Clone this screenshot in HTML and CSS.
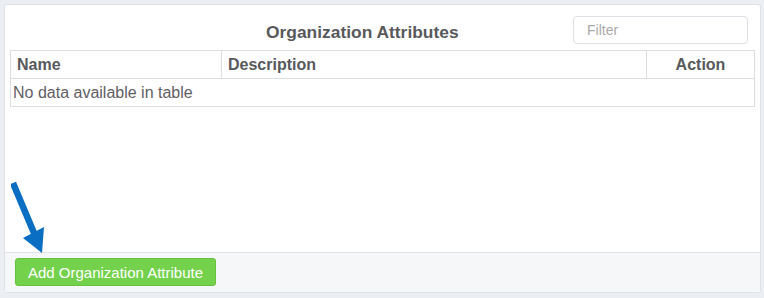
FILE: index.html
```html
<!DOCTYPE html>
<html>
<head>
<meta charset="utf-8">
<link rel="stylesheet" href="styles.css">
</head>
<body>
<div class="panel">
  <div class="panel-body">
    <div class="toolbar">
      <h2 class="title">Organization Attributes</h2>
      <input class="filter" type="text" placeholder="Filter">
    </div>
    <table class="grid">
      <thead>
        <tr>
          <th class="col-name">Name</th>
          <th class="col-desc">Description</th>
          <th class="col-action">Action</th>
        </tr>
      </thead>
      <tbody>
        <tr><td colspan="3" class="empty">No data available in table</td></tr>
      </tbody>
    </table>
  </div>
  <div class="panel-footer">
    <button class="btn-add" type="button">Add Organization Attribute</button>
  </div>
  <svg class="arrow" width="40" height="80" viewBox="0 0 40 80">
    <line x1="2" y1="4" x2="23" y2="54" stroke="#0a6fc2" stroke-width="6.5"/>
    <polygon points="12,59 33,48 31,74" fill="#0a6fc2"/>
  </svg>
</div>
</body>
</html>
```
FILE: styles.css
```css
html, body {
  margin: 0;
  padding: 0;
}
body {
  background: #ebeef3;
  font-family: "Liberation Sans", Arial, sans-serif;
  padding: 4px 3px 4px 4px;
  height: 298px;
  box-sizing: border-box;
}
.panel {
  position: relative;
  background: #fff;
  border: 1px solid #dfe2e7;
  border-radius: 3px;
  height: 289px;
  box-sizing: border-box;
  display: flex;
  flex-direction: column;
}
.panel-body {
  flex: 1;
  padding: 11px 5px 0 5px;
}
.toolbar {
  display: flex;
  align-items: center;
  padding-left: 256px;
  padding-right: 7px;
  margin-bottom: 6px;
}
.title {
  margin: 4px 0 0 0;
  font-size: 17.4px;
  font-weight: bold;
  color: #58595c;
}
.filter {
  margin-left: auto;
  width: 175px;
  height: 28px;
  box-sizing: border-box;
  border: 1px solid #dcdfe3;
  border-radius: 4px;
  padding: 0 13px;
  font-family: "Liberation Sans", Arial, sans-serif;
  font-size: 14px;
  color: #555;
  outline: none;
}
.filter::placeholder {
  color: #a9a9a9;
}
.grid {
  width: 100%;
  border-collapse: collapse;
  border: 1px solid #dedede;
  font-size: 16px;
  color: #58595c;
}
.grid th, .grid td {
  height: 28px;
  box-sizing: border-box;
  padding: 0 6px;
  border: 1px solid #dedede;
}
.grid th {
  font-weight: bold;
  text-align: left;
}
.col-name { width: 211px; }
.col-action { width: 108px; text-align: center !important; }
.grid td.empty {
  padding-left: 2px;
  color: #5f6063;
}
.panel-footer {
  height: 40px;
  box-sizing: border-box;
  background: #f6f7f9;
  border-top: 1px solid #dfe2e7;
  padding: 5px 0 0 10px;
}
.btn-add {
  width: 201px;
  height: 28px;
  background: #74d14c;
  border: 1px solid #64c23d;
  border-radius: 3px;
  color: #fff;
  font-family: "Liberation Sans", Arial, sans-serif;
  font-size: 15px;
  padding: 0;
}
.arrow {
  position: absolute;
  left: 6px;
  top: 174px;
}
```
